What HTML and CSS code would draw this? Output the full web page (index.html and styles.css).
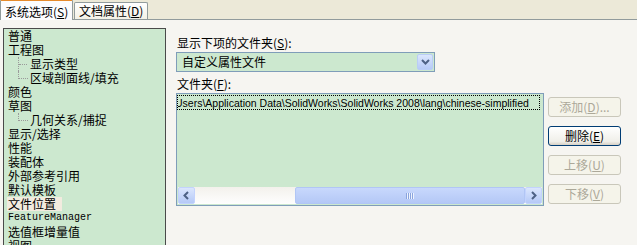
FILE: index.html
```html
<!DOCTYPE html>
<html lang="zh-CN">
<head>
    <meta charset="UTF-8">
    <title>系统选项 - 文件位置</title>
    <link rel="stylesheet" href="styles.css">
</head>
<body>
    <div class="tabs">
        <div class="tab active">系统选项(<u>S</u>)</div>
        <div class="tab">文档属性(<u>D</u>)</div>
    </div>

    <div class="pane">
        <div class="tree">
            <div class="node">普通</div>
            <div class="node">工程图</div>
            <div class="node child"><span class="twig"></span>显示类型</div>
            <div class="node child"><span class="twig last"></span>区域剖面线/填充</div>
            <div class="node">颜色</div>
            <div class="node">草图</div>
            <div class="node child"><span class="twig last"></span>几何关系/捕捉</div>
            <div class="node">显示/选择</div>
            <div class="node">性能</div>
            <div class="node">装配体</div>
            <div class="node">外部参考引用</div>
            <div class="node">默认模板</div>
            <div class="node"><span class="selected">文件位置</span></div>
            <div class="node mono">FeatureManager</div>
            <div class="node">选值框增量值</div>
            <div class="node">视图</div>
        </div>

        <div class="settings">
            <div class="label">显示下项的文件夹(<u>S</u>):</div>
            <div class="combo">
                <span class="combo-text">自定义属性文件</span>
                <span class="combo-btn">
                    <svg width="9" height="6" viewBox="0 0 9 6"><path d="M1 1 L4.5 4.5 L8 1" fill="none" stroke="#4d6185" stroke-width="2"/></svg>
                </span>
            </div>
            <div class="label second">文件夹(<u>F</u>):</div>

            <div class="folders">
                <div class="list">
                    <div class="items">
                        <div class="item"><span class="path">Users\Application Data\SolidWorks\SolidWorks 2008\lang\chinese-simplified</span></div>
                    </div>
                    <div class="hscroll">
                        <span class="arrow">
                            <svg width="7" height="9" viewBox="0 0 7 9"><path d="M5 1 L1.5 4.5 L5 8" fill="none" stroke="#4d6185" stroke-width="2"/></svg>
                        </span>
                        <div class="track">
                            <div class="thumb"><span class="grip"></span></div>
                        </div>
                        <span class="arrow">
                            <svg width="7" height="9" viewBox="0 0 7 9"><path d="M2 1 L5.5 4.5 L2 8" fill="none" stroke="#4d6185" stroke-width="2"/></svg>
                        </span>
                    </div>
                </div>

                <div class="buttons">
                    <button class="btn" disabled>添加(<u>D</u>)...</button>
                    <button class="btn">删除(<u>E</u>)</button>
                    <button class="btn" disabled>上移(<u>U</u>)</button>
                    <button class="btn" disabled>下移(<u>V</u>)</button>
                </div>
            </div>
        </div>
    </div>
</body>
</html>
```

FILE: styles.css
```css
html, body {
    margin: 0;
    height: 245px;
    overflow: hidden;
}
body {
    font-family: "Noto Sans CJK SC", "Liberation Sans", sans-serif;
    font-size: 12px;
    color: #000;
    background-color: #f6f5f1;
}
u {
    text-decoration: underline;
    text-underline-offset: 1px;
}

/* tab strip */
.tabs {
    display: flex;
    align-items: flex-end;
    height: 20px;
    background-color: #ece9d8;
    border-bottom: 1px solid #919b9c;
    box-sizing: border-box;
}
.tab {
    height: 17px;
    line-height: 16px;
    padding: 0 4px;
    margin-left: 1px;
    border: 1px solid #919b9c;
    border-bottom: none;
    border-radius: 2px 2px 0 0;
    background: linear-gradient(#ffffff, #f3f1e6);
    box-sizing: border-box;
    white-space: nowrap;
}
.tab.active {
    height: 21px;
    margin: 0 0 -1px 0;
    width: 73px;
    padding: 3px 4px 0 4px;
    border-top: 2px solid #e68b2c;
    background: #fcfcfe;
}

/* left tree */
.pane {
    display: flex;
}
.tree {
    width: 163px;
    height: 230px;
    margin: 8px 0 0 3px;
    border: 1px solid #4a4a4a;
    background-color: #cce8cf;
    padding: 0 0 0 4px;
    box-sizing: border-box;
    overflow: hidden;
}
.node {
    display: flex;
    align-items: center;
    height: 14px;
    line-height: 14px;
    white-space: nowrap;
}
.node.mono {
    font-family: "Liberation Mono", monospace;
    font-size: 10px;
}
.twig {
    display: inline-flex;
    align-items: center;
    align-self: stretch;
    width: 9px;
    margin: 0 2px 0 10px;
    border-left: 1px dotted #9a9a9a;
}
.twig::after {
    content: "";
    width: 8px;
    border-top: 1px dotted #9a9a9a;
}
.twig.last {
    align-self: flex-start;
    height: 7px;
    border-bottom: 1px dotted #9a9a9a;
}
.twig.last::after {
    display: none;
}
.selected {
    background-color: #f2ebdf;
    padding: 0 6px 0 1px;
    margin-left: -1px;
}

/* right side */
.settings {
    margin: 16px 0 0 10px;
}
.label {
    line-height: 14px;
    height: 14px;
    margin-left: 1px;
}
.label.second {
    margin-top: 5px;
}
.combo {
    display: flex;
    justify-content: space-between;
    width: 259px;
    height: 20px;
    margin-top: 2px;
    padding: 1px;
    border: 1px solid #7f9db9;
    background-color: #cce8cf;
    box-sizing: border-box;
}
.combo-text {
    line-height: 16px;
    padding-left: 4px;
}
.combo-btn {
    display: flex;
    align-items: center;
    justify-content: center;
    width: 16px;
    border: 1px solid #b9cdf6;
    border-radius: 2px;
    background: linear-gradient(#dbe6fd, #b6caf7);
    box-sizing: border-box;
}

.folders {
    display: flex;
    gap: 4px;
    margin-top: 2px;
}
.list {
    display: flex;
    flex-direction: column;
    width: 368px;
    height: 113px;
    border: 1px solid #7f9db9;
    background-color: #cce8cf;
    box-sizing: border-box;
}
.items {
    flex: 1;
    overflow: hidden;
    padding: 1px 0 0 0;
}
.item {
    height: 15px;
    line-height: 14px;
    width: 363px;
    border: 1px dotted #000;
    box-sizing: border-box;
    overflow: hidden;
    white-space: nowrap;
    font-family: "Liberation Sans", sans-serif;
    font-size: 10.5px;
}
.path {
    margin-left: -3px;
}
.hscroll {
    display: flex;
    height: 17px;
    margin: 0 1px 1px 1px;
    background: linear-gradient(#f3f1ec, #fefefe);
}
.arrow {
    display: flex;
    align-items: center;
    justify-content: center;
    width: 17px;
    border: 1px solid #c3d3fd;
    border-radius: 2px;
    background: linear-gradient(#dbe6fd, #b5c9f7);
    box-sizing: border-box;
}
.track {
    flex: 1;
    display: flex;
    padding-left: 100px;
}
.thumb {
    flex: 1;
    display: flex;
    align-items: center;
    justify-content: center;
    border: 1px solid #b1c6f5;
    border-radius: 2px;
    background: linear-gradient(#c8d8fc, #b4c8f6);
}
.grip {
    width: 8px;
    height: 6px;
    background: repeating-linear-gradient(90deg, #8aa4dd 0 1px, #eef3fe 1px 2px);
}

.buttons {
    display: flex;
    flex-direction: column;
    gap: 9px;
    padding-top: 4px;
}
.btn {
    width: 73px;
    height: 20px;
    padding: 0;
    font-family: "Noto Sans CJK SC", "Liberation Sans", sans-serif;
    font-size: 12px;
    line-height: 16px;
    color: #000;
    border: 1px solid #003c74;
    border-radius: 3px;
    background: linear-gradient(#ffffff, #f0efe9 80%, #d6d0c5);
}
.btn:disabled {
    color: #aca899;
    border-color: #c9c7ba;
    background: #f5f4ea;
}
```
